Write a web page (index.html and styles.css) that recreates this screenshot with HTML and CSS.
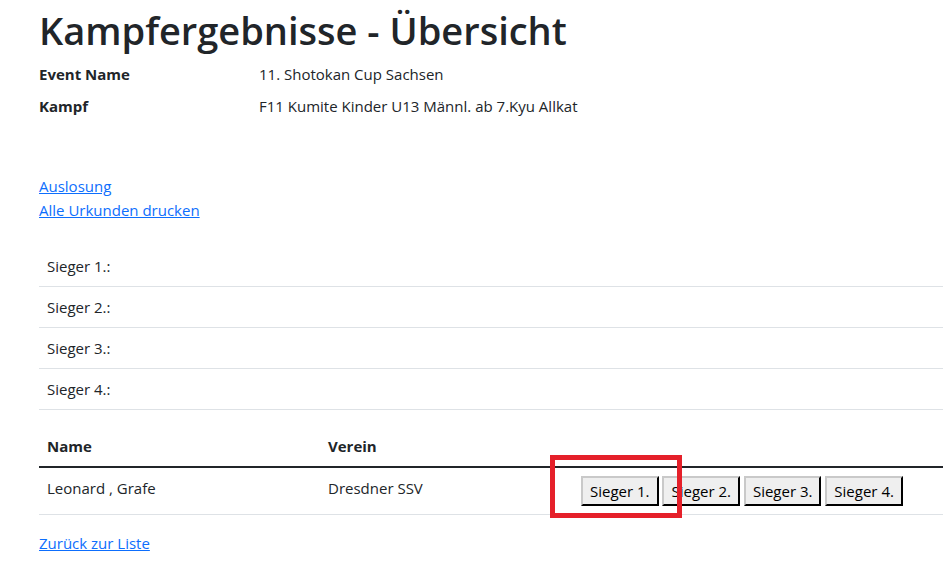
FILE: index.html
```html
<!DOCTYPE html>
<html lang="de">
<head>
  <meta charset="UTF-8" />
  <title>Kampfergebnisse - Übersicht</title>
  <link rel="stylesheet" href="styles.css">
</head>
<body>
  <div class="container">
    <h1>Kampfergebnisse - Übersicht</h1>

    <dl class="details">
      <dt>Event Name</dt>
      <dd>11. Shotokan Cup Sachsen</dd>
      <dt>Kampf</dt>
      <dd>F11 Kumite Kinder U13 Männl. ab 7.Kyu Allkat</dd>
    </dl>

    <div class="links">
      <a href="#">Auslosung</a><br />
      <a href="#">Alle Urkunden drucken</a>
    </div>

    <!-- Platzierungen -->
    <table class="table">
      <tbody>
        <tr><td>Sieger 1.:</td></tr>
        <tr><td>Sieger 2.:</td></tr>
        <tr><td>Sieger 3.:</td></tr>
        <tr><td>Sieger 4.:</td></tr>
      </tbody>
    </table>

    <!-- Teilnehmer -->
    <table class="table">
      <thead>
        <tr>
          <th class="col-name">Name</th>
          <th class="col-verein">Verein</th>
          <th></th>
        </tr>
      </thead>
      <tbody>
        <tr>
          <td>Leonard , Grafe</td>
          <td>Dresdner SSV</td>
          <td class="actions">
            <button>Sieger 1.</button>
            <button>Sieger 2.</button>
            <button>Sieger 3.</button>
            <button>Sieger 4.</button>
            <span class="marker"></span>
          </td>
        </tr>
      </tbody>
    </table>

    <a href="#">Zurück zur Liste</a>
  </div>
</body>
</html>
```

FILE: styles.css
```css
html, body {
  overflow: hidden;
}
body {
  margin: 0;
  font-family: "Segoe UI", "Open Sans", sans-serif;
  font-size: 15px;
  line-height: 24px;
  color: #212529;
  background: #fff;
}
.container {
  width: 1300px;
  padding: 6px 0 0 39px;
}
h1 {
  margin: 0 0 8px;
  font-size: 38px;
  font-weight: 600;
  line-height: 48px;
}
.details {
  display: grid;
  grid-template-columns: 220px 1fr;
  margin: 0 0 48px;
}
.details dt {
  font-weight: 700;
}
.details dd {
  margin: 0 0 8px;
}
a {
  color: #0d6efd;
}
.links {
  margin-bottom: 24px;
}
.table {
  width: 100%;
  border-collapse: collapse;
  margin-bottom: 16px;
}
.table td,
.table th {
  padding: 8px;
  text-align: left;
  vertical-align: top;
  border-bottom: 1px solid #dee2e6;
}
.table th {
  font-weight: 700;
}
.table thead th {
  border-bottom: 2px solid #212529;
}
.col-name {
  width: 265px;
}
.col-verein {
  width: 237px;
}
.actions {
  position: relative;
  padding-left: 16px;
}
button {
  font: inherit;
  line-height: 24px;
  padding: 1px 7px;
  margin: 0;
  color: #000;
  background: #efefef;
  border: 2px outset #767676;
  border-color: #c9c9c9 #444 #444 #c9c9c9;
}
.marker {
  position: absolute;
  left: -23px;
  top: -13px;
  width: 122px;
  height: 53px;
  border: 5px solid #e5202a;
}
```
